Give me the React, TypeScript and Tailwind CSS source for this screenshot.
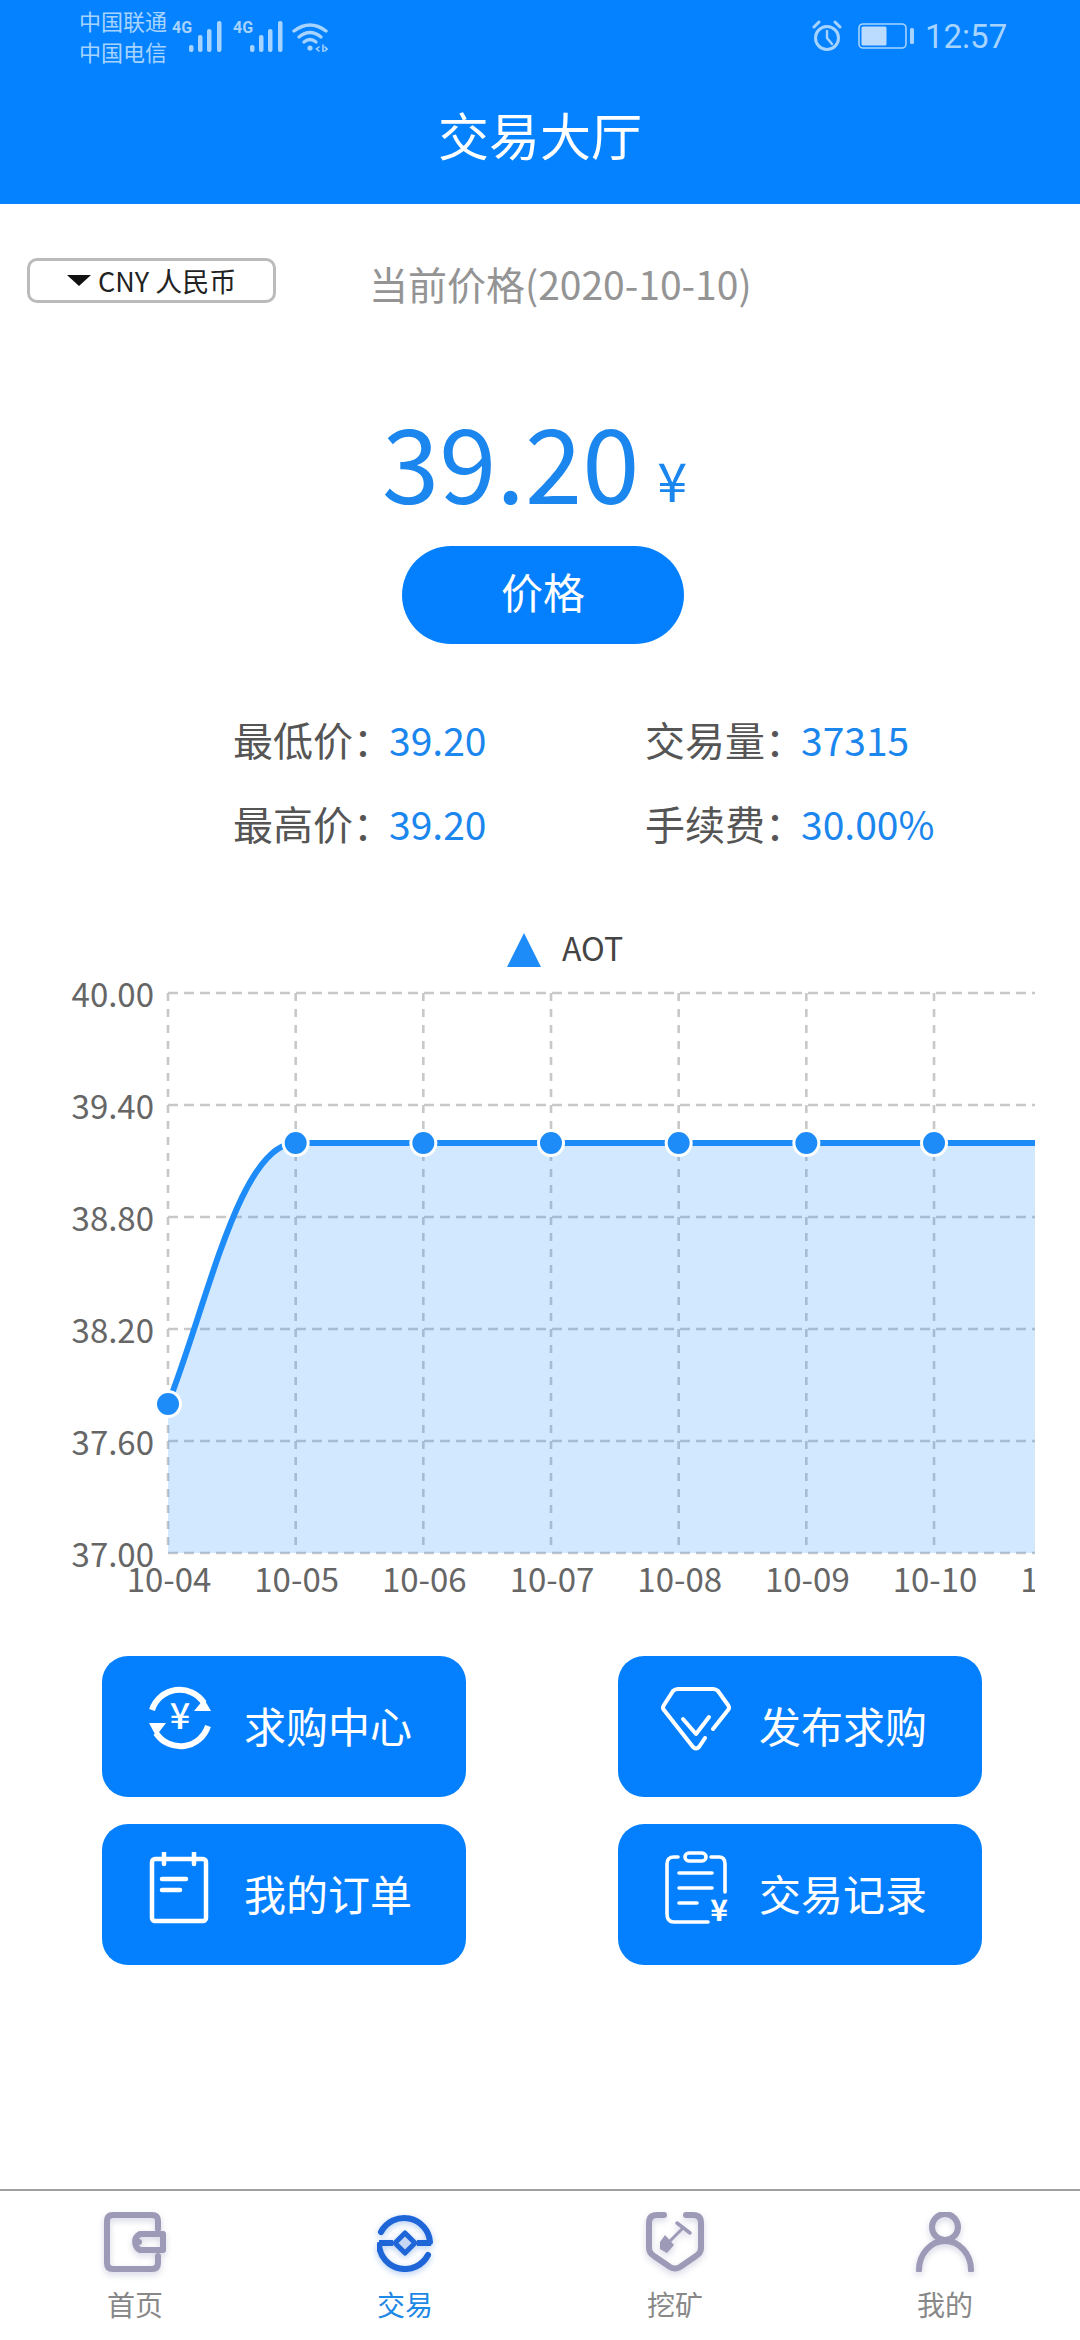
const STATS = [
	[
		{ label: "最低价：", value: "39.20" },
		{ label: "交易量：", value: "37315" },
	],
	[
		{ label: "最高价：", value: "39.20" },
		{ label: "手续费：", value: "30.00%" },
	],
];

const Y_TICKS = [
	{ y: 993, text: "40.00" },
	{ y: 1105, text: "39.40" },
	{ y: 1217, text: "38.80" },
	{ y: 1329, text: "38.20" },
	{ y: 1441, text: "37.60" },
	{ y: 1553, text: "37.00" },
];

const X_TICKS = ["10-04", "10-05", "10-06", "10-07", "10-08", "10-09", "10-10", "10-11"];
const STEP = 127.67;
const LEFT = 168;
const RIGHT = 1035;
const FLAT = 1143;
const CURVE = `M${LEFT} 1404 C208 1302 240 ${FLAT} 296 ${FLAT} L${RIGHT} ${FLAT}`;

const SignalBars = () => (
	<svg width="33" height="31" viewBox="0 0 33 31" fill="currentColor" className="mt-[21px]">
		<rect x="0" y="24" width="4.5" height="7" rx="2" />
		<rect x="9" y="14" width="4.5" height="17" rx="2" />
		<rect x="18" y="8" width="4.5" height="23" rx="2" />
		<rect x="28" y="0" width="4.5" height="31" rx="2" />
	</svg>
);

const FourG = () => (
	<span className="mt-[20px] h-[16px] w-[17px] text-[16px] leading-[16px] font-bold font-['Roboto',sans-serif]">
		4G
	</span>
);

const StatusBar = () => (
	<div className="flex h-[74px] items-start justify-between pl-[79px] pr-[73px] text-[#a6d3ff]">
		<div className="flex items-start">
			<div className="w-[93px] pt-[5px] text-[22px] leading-[31px]">
				<div>中国联通</div>
				<div>中国电信</div>
			</div>
			<FourG />
			<SignalBars />
			<div className="w-[11px]" />
			<FourG />
			<SignalBars />
			<svg width="36" height="30" viewBox="0 0 36 30" fill="none" stroke="currentColor" strokeWidth="3.4" strokeLinecap="round" className="ml-[9px] mt-[22px]">
				<path d="M2 9 Q18 -3 34 9" />
				<path d="M7 15 Q18 6 29 15" />
				<path d="M12 20 Q18 15 24 20" />
				<circle cx="18" cy="26" r="2.6" fill="currentColor" stroke="none" />
				<path d="M27 25 l-2.5 2 l2.5 2 M31 23 v7 M33 25 l2 2 l-2 2" strokeWidth="1.6" />
			</svg>
		</div>
		<div className="flex items-start">
			<svg width="30" height="32" viewBox="0 0 30 32" fill="none" stroke="currentColor" strokeWidth="3" strokeLinecap="round" className="mt-[20px]">
				<circle cx="15" cy="18" r="11.5" />
				<path d="M15 11 V18 L20 24" strokeWidth="2.4" />
				<path d="M2 7 L7 2 M23 2 L28 7" />
			</svg>
			<svg width="56" height="26" viewBox="0 0 56 26" fill="none" stroke="currentColor" className="ml-[16px] mt-[23px]">
				<rect x="1" y="1" width="47" height="24" rx="4" strokeWidth="1.6" />
				<rect x="3.5" y="3.5" width="25" height="19" rx="1.5" fill="#bcdcff" stroke="none" />
				<rect x="52" y="5" width="4" height="16" rx="1.5" fill="currentColor" stroke="none" />
			</svg>
			<span className="ml-[11px] w-[82px] pt-[17px] text-[33px] leading-[40px] font-['Roboto',sans-serif]">12:57</span>
		</div>
	</div>
);

const ExchangeIcon = () => (
	<svg width="64" height="64" viewBox="0 0 64 64" fill="none" stroke="#fff" strokeWidth="6" className="mt-[-17px]">
		<path d="M4 24 A29 29 0 0 1 56 17" />
		<path d="M60 40 A29 29 0 0 1 8 47" />
		<path d="M46 25 L63 25 L56 13 Z" fill="#fff" stroke="none" />
		<path d="M1 37 L18 37 L8 50 Z" fill="#fff" stroke="none" />
		<text x="32" y="43" textAnchor="middle" fontSize="36" fontWeight="500" fill="#fff" stroke="none" fontFamily="'Noto Sans CJK SC'">¥</text>
	</svg>
);

const OrderIcon = () => (
	<svg width="64" height="72" viewBox="0 0 64 72" fill="none" stroke="#fff" strokeWidth="4.5" strokeLinecap="round" strokeLinejoin="round" className="mt-[-14px]">
		<rect x="4" y="7" width="54" height="62" rx="3" />
		<path d="M16 1 V12 M46 1 V12" />
		<path d="M14 27 H38 M14 38 H32" />
	</svg>
);

const DiamondIcon = () => (
	<svg width="70" height="64" viewBox="0 0 70 64" fill="none" stroke="#fff" strokeWidth="4" strokeLinecap="round" strokeLinejoin="round" className="mt-[-16px] ml-[-4px]">
		<path d="M52 42 L67 23 Q69 21 67 18 L57 4 Q55 2 52 2 H17 Q14 2 12 4 L3 18 Q1 21 3 23 L32 60 Q35 63 38 60 L44 51" />
		<path d="M22 32 L35 47 L48 30" />
	</svg>
);

const RecordIcon = () => (
	<svg width="66" height="76" viewBox="0 0 66 76" fill="none" stroke="#fff" strokeWidth="3.6" strokeLinecap="round" strokeLinejoin="round" className="mt-[-11px]">
		<rect x="20" y="2" width="21" height="8" rx="4" />
		<path d="M13 6 H9 Q2 6 2 13 V63 Q2 71 9 71 H43" />
		<path d="M46 6 H54 Q60 6 60 13 V41" />
		<path d="M14 22 H47 M14 37 H47 M14 52 H32" />
		<text x="54" y="70" textAnchor="middle" fontSize="30" fontWeight="700" fill="#fff" stroke="none" fontFamily="'Noto Sans CJK SC'">¥</text>
	</svg>
);

const ActionButton = ({ icon, label, gap }: { icon: React.ReactNode; label: string; gap: string }) => (
	<button className={`flex h-[141px] w-[364px] items-center rounded-[26px] bg-[#0480ff] ${gap}`}>
		{icon}
		<span className="-mt-[3px] text-[42px] leading-[60px] whitespace-nowrap text-white">{label}</span>
	</button>
);

const WalletIcon = () => (
	<svg width="62" height="60" viewBox="0 0 62 60" fill="none" stroke="#9c9ab6" strokeWidth="6" strokeLinecap="round" className="drop-shadow-[0_3px_3px_rgba(120,120,170,0.3)]">
		<path d="M54 17 V9 Q54 3 48 3 H9 Q3 3 3 9 V51 Q3 57 9 57 H48 Q54 57 54 51 V44" />
		<path d="M59 22 H36 A9 9 0 0 0 36 38 H59 Z" strokeLinejoin="round" />
		<circle cx="35" cy="30" r="3" fill="#9c9ab6" stroke="none" />
	</svg>
);

const TradeIcon = () => (
	<svg width="56" height="60" viewBox="0 0 56 60" fill="none" stroke="#1e66d8" strokeWidth="6" strokeLinecap="round" className="drop-shadow-[0_2px_3px_rgba(30,102,216,0.35)]">
		<path d="M4 20 A26 26 0 0 1 53 30" />
		<path d="M51 43 A26 26 0 0 1 2 33" />
		<path d="M2 31 H16 M40 31 H54" strokeLinecap="butt" />
		<path d="M28 21 L38 31 L28 41 L18 31 Z" strokeWidth="5" strokeLinejoin="round" fill="#c7d6f2" />
	</svg>
);

const MineIcon = () => (
	<svg width="58" height="60" viewBox="0 0 58 60" fill="none" stroke="#9c9ab6" strokeWidth="6" strokeLinecap="round" className="drop-shadow-[0_3px_3px_rgba(120,120,170,0.3)]">
		<path d="M18 3 H11 Q3 3 3 11 V36 Q3 41 8 44 L24 55 Q29 58 34 55 L50 44 Q55 41 55 36 V11 Q55 3 47 3 H40" />
		<path d="M37 16 L23 30" strokeWidth="3" />
		<path d="M31 11 L44 21" strokeWidth="3.5" />
		<path d="M19 23 L28 33 L21 41 L14 37 V30 Z" fill="#9c9ab6" stroke="none" />
	</svg>
);

const UserIcon = () => (
	<svg width="58" height="60" viewBox="0 0 58 60" fill="none" stroke="#9c9ab6" strokeWidth="6" strokeLinecap="round" className="drop-shadow-[0_3px_3px_rgba(120,120,170,0.3)]">
		<circle cx="29" cy="15" r="13" />
		<path d="M3 58 A26 29 0 0 1 55 58" />
	</svg>
);

const TABS = [
	{ label: "首页", icon: <WalletIcon />, active: false },
	{ label: "交易", icon: <TradeIcon />, active: true },
	{ label: "挖矿", icon: <MineIcon />, active: false },
	{ label: "我的", icon: <UserIcon />, active: false },
];

const PriceChart = () => (
	<svg width="1035" height="690" viewBox="0 920 1035 690" className="block">
		{Y_TICKS.map((t) => (
			<g key={t.y}>
				<line x1={LEFT} x2={RIGHT} y1={t.y} y2={t.y} stroke="#c8c8c8" strokeWidth="2.6" strokeDasharray="10 6" />
				<text x="154" y={t.y + 14} textAnchor="end" fontSize="33" fill="#666666">{t.text}</text>
			</g>
		))}
		{X_TICKS.map((label, i) => (
			<g key={label}>
				{i < 7 && (
					<line x1={LEFT + i * STEP} x2={LEFT + i * STEP} y1={993} y2={1553} stroke="#c8c8c8" strokeWidth="2.6" strokeDasharray="8 8" />
				)}
				<text x={LEFT + i * STEP + 1} y="1592" textAnchor="middle" fontSize="33" fill="#666666">{label}</text>
			</g>
		))}
		<path d={`${CURVE} L${RIGHT} 1553 L${LEFT} 1553 Z`} fill="#1e8cf8" fillOpacity="0.2" />
		<path d={CURVE} fill="none" stroke="#1e8cf8" strokeWidth="6" />
		{[0, 1, 2, 3, 4, 5, 6].map((i) => (
			<circle key={i} cx={LEFT + i * STEP} cy={i === 0 ? 1404 : FLAT} r="12.5" fill="#1e8cf8" stroke="#ffffff" strokeWidth="3" />
		))}
		<path d="M524 933 L541 967 L507 967 Z" fill="#1e8cf8" />
		<text x="562" y="961" fontSize="32" fill="#444444">AOT</text>
	</svg>
);

export default function App() {
	return (
		<div className="flex h-[2340px] w-[1080px] flex-col overflow-hidden bg-white font-['Noto_Sans_CJK_SC','Noto_Sans',sans-serif]">
			<header className="h-[204px] bg-[#0482ff]">
				<StatusBar />
				<h1 className="pt-[25px] text-center text-[51px] leading-[70px] font-normal text-white">交易大厅</h1>
			</header>

			<div className="mt-[54px] flex items-start pl-[27px]">
				<div className="flex h-[45px] w-[249px] items-center rounded-[10px] border-[3px] border-[#bbbbbb] pl-[37px] text-[27px] leading-none whitespace-nowrap text-[#222222]">
					<span className="mr-[7px] h-0 w-0 border-x-[12px] border-t-[11px] border-x-transparent border-t-[#111111]" />
					CNY 人民币
				</div>
				<span className="ml-[93px] -mt-[4px] h-[55px] text-[39px] leading-[58px] whitespace-nowrap text-[#949494]">当前价格(2020-10-10)</span>
			</div>

			<div className="mt-[91px] flex h-[120px] items-center pl-[382px] text-[#1a86ee]">
				<span className="text-[103px] leading-[120px]">39.20</span>
				<span className="ml-[18px] mt-[38px] text-[54px] leading-[60px]">¥</span>
			</div>

			<button className="ml-[402px] mt-[26px] h-[98px] w-[282px] rounded-[49px] bg-[#0480ff] pb-[10px] text-[42px] text-white">价格</button>

			<div className="mt-[75px] flex flex-col gap-[44px] pl-[233px]">
				{STATS.map((row, i) => (
					<div key={i} className="flex h-[40px] items-center text-[40px] leading-[40px]">
						{row.map((s) => (
							<div key={s.label} className="flex w-[412px] items-center whitespace-nowrap">
								<span className="w-[156px] text-[#555555]">{s.label}</span>
								<span className="text-[39px] text-[#1a86ee]">{s.value}</span>
							</div>
						))}
					</div>
				))}
			</div>

			<div className="mt-[77px]">
				<PriceChart />
			</div>

			<div className="mt-[46px] grid grid-cols-[364px_364px] gap-x-[152px] gap-y-[27px] pl-[102px]">
				<ActionButton icon={<ExchangeIcon />} label="求购中心" gap="pl-[46px] gap-[32px]" />
				<ActionButton icon={<DiamondIcon />} label="发布求购" gap="pl-[47px] gap-[28px]" />
				<ActionButton icon={<OrderIcon />} label="我的订单" gap="pl-[46px] gap-[32px]" />
				<ActionButton icon={<RecordIcon />} label="交易记录" gap="pl-[47px] gap-[28px]" />
			</div>

			<nav className="mt-auto grid h-[151px] grid-cols-4 border-t-2 border-[#a0a0a0] pt-[21px]">
				{TABS.map((t) => (
					<div key={t.label} className="flex flex-col items-center">
						{t.icon}
						<span className={`mt-[12px] text-[28px] leading-[40px] ${t.active ? "text-[#1e88e5]" : "text-[#888888]"}`}>
							{t.label}
						</span>
					</div>
				))}
			</nav>
		</div>
	);
}
